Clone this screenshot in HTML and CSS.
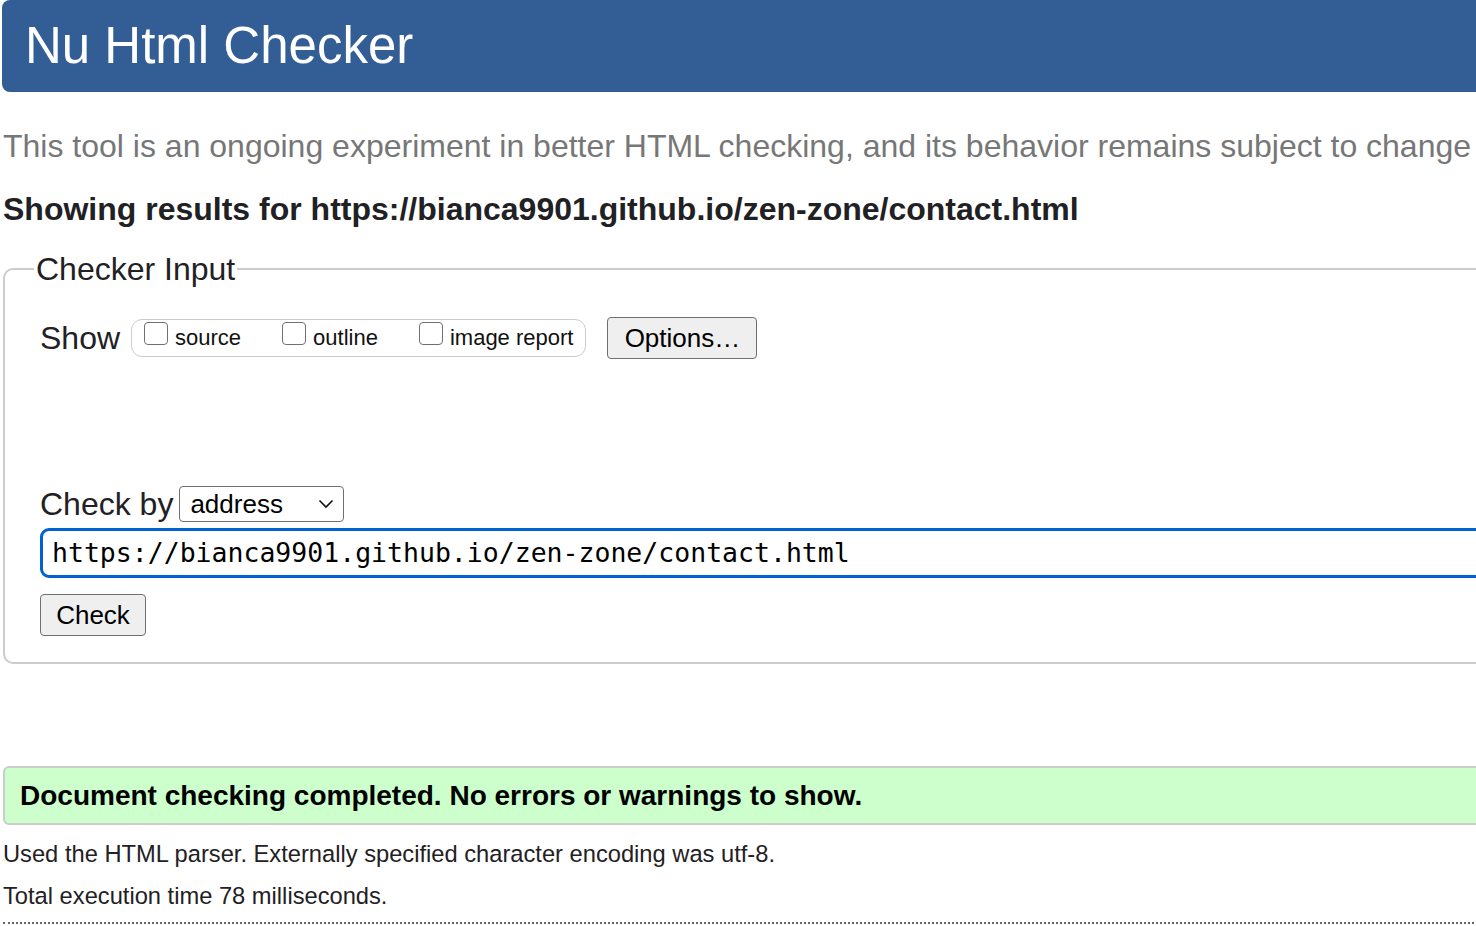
FILE: index.html
```html
<!DOCTYPE html>
<html lang="en">
<head>
<meta charset="utf-8">
<title>Showing results for https://bianca9901.github.io/zen-zone/contact.html - Nu Html Checker</title>
<link rel="stylesheet" href="styles.css">
</head>
<body>
<div class="page">
  <header class="masthead"><h1 class="title">Nu Html Checker</h1></header>
  <p class="intro">This tool is an ongoing experiment in better HTML checking, and its behavior remains subject to change</p>
  <h2 class="results-for">Showing results for https://bianca9901.github.io/zen-zone/contact.html</h2>
  <form class="checker-form">
    <fieldset class="checker-input">
      <legend class="legend">Checker Input</legend>
      <div class="show-row">
        <span class="row-label">Show</span>
        <span class="show-group">
          <label class="opt"><span class="cb"></span>source</label>
          <label class="opt"><span class="cb"></span>outline</label>
          <label class="opt"><span class="cb"></span>image report</label>
        </span>
        <button type="button" class="btn btn-options">Options…</button>
      </div>
      <div class="checkby-row">
        <span class="row-label">Check by</span>
        <span class="select">address<svg class="chev" width="16" height="10" viewBox="0 0 16 10"><path d="M1.5 1.5 L8 8 L14.5 1.5" fill="none" stroke="#111" stroke-width="1.6"/></svg></span>
      </div>
      <div class="url-input">https://bianca9901.github.io/zen-zone/contact.html</div>
      <button type="button" class="btn btn-check">Check</button>
    </fieldset>
  </form>
  <div class="success"><p class="success-text">Document checking completed. No errors or warnings to show.</p></div>
  <p class="details">Used the HTML parser. Externally specified character encoding was utf-8.</p>
  <p class="details details-time">Total execution time 78 milliseconds.</p>
  <hr class="sep">
</div>
</body>
</html>
```
FILE: styles.css
```css
html, body {
  margin: 0;
  padding: 0;
  overflow: hidden;
  background: #fff;
}
body {
  font-family: "Liberation Sans", Arial, Helvetica, sans-serif;
  color: #222;
}
.page {
  width: 1520px;
  margin-left: 2px;
}
.masthead {
  height: 92px;
  background: #335e95;
  border-radius: 8px;
  display: flex;
  align-items: center;
  padding-left: 23px;
}
.title {
  margin: 0;
  font-size: 51px;
  line-height: 92px;
  font-weight: normal;
  color: #fff;
}
.intro {
  margin: 34px 0 0 1px;
  font-size: 32px;
  line-height: 40px;
  color: #777;
  white-space: nowrap;
}
.results-for {
  margin: 23px 0 0 1px;
  font-size: 32px;
  line-height: 40px;
  font-weight: bold;
  color: #1f2124;
  white-space: nowrap;
}
.checker-form {
  margin: 24px 0 0 1px;
}
.checker-input {
  margin: 0;
  border: 2px solid #ccc;
  border-radius: 10px;
  padding: 32px 0 26px 35px;
}
.legend {
  margin-left: -6px;
  padding: 0 2px;
  font-size: 32px;
  line-height: 32px;
  color: #1f2124;
}
.show-row {
  display: flex;
  align-items: center;
  height: 42px;
}
.row-label {
  font-size: 32px;
  line-height: 40px;
  color: #1f2124;
}
.show-group {
  margin-left: 11px;
  height: 36px;
  border: 1px solid #ccc;
  border-radius: 11px;
  padding: 0 12px 0 12px;
  font-size: 22px;
  line-height: 36px;
  display: flex;
  gap: 41px;
  white-space: nowrap;
}
.opt {
  display: block;
  color: #111;
}
.cb {
  display: inline-block;
  width: 22px;
  height: 21px;
  border: 1.5px solid #707070;
  border-radius: 4px;
  vertical-align: baseline;
  margin-right: 7px;
  background: #fff;
}
.btn {
  font-family: "Liberation Sans", Arial, Helvetica, sans-serif;
  font-size: 26px;
  height: 42px;
  background: #efefef;
  border: 1.5px solid #6f6f6f;
  border-radius: 4px;
  color: #000;
  padding: 0 15px;
  line-height: 36px;
}
.btn-options {
  margin-left: 21px;
  width: 150px;
}
.checkby-row {
  margin-top: 127px;
  display: flex;
  align-items: center;
  height: 36px;
}
.select {
  margin-left: 6px;
  box-sizing: border-box;
  width: 165px;
  height: 36px;
  border: 1.5px solid #707070;
  border-radius: 4px;
  padding-left: 10px;
  font-size: 26px;
  line-height: 33px;
  color: #000;
  display: flex;
  align-items: center;
  justify-content: space-between;
  padding-right: 9px;
}
.chev {
  display: block;
}
.url-input {
  margin-top: 6px;
  box-sizing: border-box;
  height: 50px;
  border: 3px solid #0062d1;
  border-radius: 9px;
  padding-left: 9px;
  font-family: "DejaVu Sans Mono", Menlo, monospace;
  font-size: 26.5px;
  line-height: 44px;
  color: #000;
  white-space: nowrap;
}
.btn-check {
  margin-top: 16px;
  display: block;
  width: 106px;
}
.success {
  margin: 102px 0 0 1px;
  box-sizing: border-box;
  height: 59px;
  background: #ccffcc;
  border: 2px solid #ccc;
  border-radius: 6px;
  padding-left: 15px;
  display: flex;
  align-items: center;
}
.success-text {
  margin: 0;
  font-size: 28px;
  font-weight: bold;
  color: #000;
  white-space: nowrap;
}
.details {
  margin: 13px 0 0 1px;
  font-size: 23.7px;
  line-height: 32px;
  color: #1f2124;
  white-space: nowrap;
}
.details-time {
  margin-top: 10px;
}
.sep {
  margin: 10px 0 0 1px;
  border: 0;
  border-top: 2px dotted #666;
  height: 0;
}
```
